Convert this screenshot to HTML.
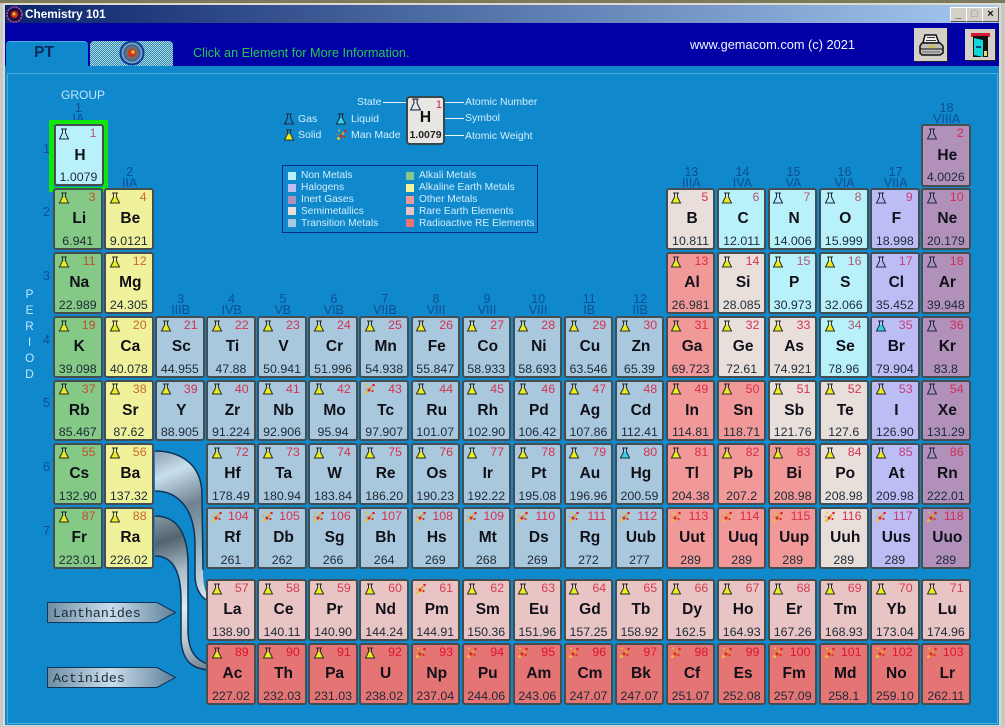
<!DOCTYPE html>
<html><head><meta charset="utf-8"><title>Chemistry 101</title>
<style>
html,body{margin:0;padding:0;width:1005px;height:727px;overflow:hidden;background:#c9c9c2;font-family:"Liberation Sans",sans-serif}
.a,.e,.g{position:absolute}
.e{width:45.5px;height:57.5px;margin:-2px 0 0 -1.5px;border:2.75px solid #464d51;border-radius:3px;z-index:3;color:#111}
.e svg{position:absolute;left:2.5px;top:1.5px;width:12px;height:12px}
.e b{position:absolute;right:5px;top:1px;font:12.4px/13px "Liberation Sans",sans-serif;color:#d83050}
.e u{position:absolute;left:3px;right:0;top:20px;text-align:center;text-decoration:none;font:bold 15.5px/18px "Liberation Sans",sans-serif;color:#101018}
.e i{position:absolute;left:0;right:0;top:44.5px;text-align:center;font:12.4px/13px "Liberation Sans",sans-serif;color:#1c2a36}
.nm{background:#b9f1fb}.nm b{color:#b05a70}
.ha{background:#bdbdf6}.ha b{color:#c83c78}
.in{background:#b191ba}.in b{color:#d42c58}
.se{background:#e8dfdb}
.tr{background:#a9c8dd}
.ak{background:#85c986}.ak b{color:#c0502c}
.ae{background:#f0f19b}.ae b{color:#c8682a}
.om{background:#f19999}.om b{color:#dc2c48}
.re{background:#e8c4c5}.re b{color:#d83a50}
.ra{background:#e57475}.ra b{color:#e0142c}
.c1{left:54.5px}.c2{left:105.6px}.c3{left:156.6px}.c4{left:207.7px}.c5{left:258.8px}.c6{left:309.8px}.c7{left:360.9px}.c8{left:412px}.c9{left:463px}.c10{left:514.1px}.c11{left:565.2px}.c12{left:616.2px}.c13{left:667.3px}.c14{left:718.4px}.c15{left:769.4px}.c16{left:820.5px}.c17{left:871.6px}.c18{left:922.6px}
.r1{top:126px;height:58.5px}.r2{top:190px}.r3{top:254px}.r4{top:318px}.r5{top:381.5px}.r6{top:445px}.r7{top:509px}.r8{top:581px}.r9{top:645px}
.r1 i{top:44.5px}.r1 u{top:21px}
.g{width:48px;text-align:center;font:12.5px/11px "Liberation Sans",sans-serif;color:#0c4f92;z-index:1}
.p{position:absolute;font:12.5px/14px "Liberation Sans",sans-serif;color:#0c4f92;z-index:1}
.w{position:absolute;font:10.5px/12px "Liberation Sans",sans-serif;color:#d3eefb;white-space:nowrap;z-index:2}
.t{font-size:10.2px}
.k{position:absolute;width:8px;height:8px}
.l{position:absolute;background:#eaf6fb;height:1px}
.b{position:absolute;width:15px;height:13px;background:#d4d0c8;border:1px solid;border-color:#fff #555 #555 #fff;font:bold 11px/13px "Liberation Sans",sans-serif;text-align:center;color:#111}
</style></head>
<body>
<svg width="0" height="0" style="position:absolute"><defs>
<symbol id="g" viewBox="0 0 12 12"><path d="M3 1H9M4.500 1V5L1.500 11H10.500L7.500 5V1" fill="none" stroke="#1c2a40" stroke-width="1"/></symbol>
<symbol id="s" viewBox="0 0 12 12"><path d="M4.500 5H7.500L10.500 11H1.500Z" fill="#ecec24"/><path d="M3 1H9M4.500 1V5L1.500 11H10.500L7.500 5V1" fill="none" stroke="#2a3020" stroke-width="1"/></symbol>
<symbol id="l" viewBox="0 0 12 12"><path d="M4.500 5H7.500L10.500 11H1.500Z" fill="#35d3e6"/><path d="M3 1H9M4.500 1V5L1.500 11H10.500L7.500 5V1" fill="none" stroke="#1c2a40" stroke-width="1"/></symbol>
<symbol id="m" viewBox="0 0 12 12"><circle cx="9.500" cy="2" r="1.300" fill="#e02020"/><circle cx="3" cy="1.500" r="1" fill="#e8c030"/><circle cx="7" cy="4.500" r="1.400" fill="#e8a020"/><circle cx="5" cy="7" r="1.600" fill="#d83018"/><circle cx="2.500" cy="9.500" r="1.500" fill="#e8c030"/><circle cx="8.500" cy="8" r="1.100" fill="#d83018"/><circle cx="1.500" cy="5.500" r=".8" fill="#e09020"/></symbol>
<linearGradient id="r1" gradientUnits="userSpaceOnUse" x1="150" y1="445" x2="215" y2="600"><stop offset="0" stop-color="#7d8f9e"/><stop offset=".2" stop-color="#c8dfee"/><stop offset=".42" stop-color="#6f8291"/><stop offset=".75" stop-color="#a8bcc9"/><stop offset="1" stop-color="#dce8ef"/></linearGradient>
<linearGradient id="r2" gradientUnits="userSpaceOnUse" x1="150" y1="515" x2="205" y2="670"><stop offset="0" stop-color="#8b9daa"/><stop offset=".18" stop-color="#54646f"/><stop offset=".38" stop-color="#a8bcc8"/><stop offset=".6" stop-color="#dfeaf1"/><stop offset=".8" stop-color="#b5c6d2"/><stop offset="1" stop-color="#6f8291"/></linearGradient>
<linearGradient id="ar" x1="0" y1="0" x2="1" y2="0"><stop offset="0" stop-color="#6f8ea4"/><stop offset=".5" stop-color="#c8deec"/><stop offset="1" stop-color="#5f8098"/></linearGradient>
</defs></svg>

<div class="a" style="left:0;top:0;width:1005px;height:3px;background:#7d7a5c"></div>
<div class="a" style="left:3px;top:3px;width:998px;height:723px;background:#dcd9d0"></div>
<div class="a" style="left:5px;top:5px;width:994px;height:18px;background:linear-gradient(90deg,#0a246a,#a6caf0)"></div>
<div class="a" style="left:5px;top:23px;width:994px;height:43px;background:#0000a6"></div>
<div class="a" style="left:5px;top:66px;width:994px;height:659px;background:#1088cc"></div>
<div class="a" style="left:7px;top:73px;width:989px;height:649px;border:1px solid #4aaedd"></div>

<svg class="a" style="left:6px;top:6px" width="17" height="17" viewBox="0 0 17 17"><circle cx="8.500" cy="8.500" r="7.500" fill="#201040" stroke="#c050b0" stroke-dasharray="2 1" stroke-width="1.500"/><circle cx="8.500" cy="8.500" r="3.500" fill="#d83018"/><circle cx="8" cy="8" r="1.500" fill="#f0c020"/></svg>
<div class="a" style="left:25px;top:7px;font:bold 11.800px/14px 'Liberation Sans',sans-serif;color:#fff">Chemistry 101</div>
<div class="b" style="left:950px;top:7px">_</div><div class="b" style="left:966px;top:7px;color:#888">□</div><div class="b" style="left:982px;top:7px">×</div>

<div class="a" style="left:6px;top:41px;width:82px;height:26px;padding-right:6px;background:#1088cc;border-radius:4px 4px 0 0;border-top:1px solid #4aaedd;box-sizing:border-box;text-align:center;font:bold 15.500px/21px 'Liberation Sans',sans-serif;color:#0a2a5a">PT</div>
<div class="a" style="left:90px;top:41px;width:83px;height:25px;border-radius:4px 4px 0 0;background:repeating-conic-gradient(#b5d5cf 0 25%,#2a8cc4 0 50%) 0 0/2px 2px"></div>
<svg class="a" style="left:119px;top:40px" width="26" height="26" viewBox="0 0 26 26"><circle cx="13" cy="13" r="11.500" fill="#7fa0b0" stroke="#0a3aa0" stroke-width="2"/><circle cx="13" cy="13" r="8" fill="#6b6b70" stroke="#1060c0" stroke-width="1"/><circle cx="13" cy="13" r="4" fill="#d83018"/><circle cx="14" cy="12" r="1.800" fill="#f0c020"/></svg>
<div class="a" style="left:193px;top:46px;font:12.700px/14px 'Liberation Sans',sans-serif;color:#28c850">Click an Element for More Information.</div>
<div class="a" style="left:690px;top:38px;font:12.800px/14px 'Liberation Sans',sans-serif;color:#f2f6ff">www.gemacom.com (c) 2021</div>

<div class="a" style="left:914px;top:28px;width:33px;height:33px;background:#d4d0c8;box-shadow:1px 1px 0 #222"></div>
<svg class="a" style="left:919px;top:34px" width="25" height="23" viewBox="0 0 25 23"><path d="M6 1H17L20 9H4Z" fill="#f2f2f2" stroke="#111" stroke-width="1.500"/><path d="M8 3.500H16M7 6.500H17" stroke="#333"/><path d="M3 9H21L24 12V19L21 21H3L1 19V12Z" fill="#bdbdbd" stroke="#111" stroke-width="1.500"/><path d="M1.500 15H23.500" stroke="#111"/><path d="M10 12.500H16" stroke="#d8c020" stroke-width="2"/><path d="M3 18H21" stroke="#666"/></svg>
<div class="a" style="left:965px;top:29px;width:30px;height:31px;background:#d4d0c8;box-shadow:1px 1px 0 #222"></div>
<svg class="a" style="left:970px;top:32px" width="21" height="26" viewBox="0 0 21 26"><rect x="1" y="1" width="19" height="4" fill="#d81830"/><rect x="3" y="4" width="15" height="21" fill="#111"/><path d="M4 6L13 8V25L4 23Z" fill="#10d8d8"/><rect x="14" y="19" width="3" height="5" fill="#e8d870"/><path d="M6 15H11" stroke="#115" stroke-width="1.500"/></svg>

<div class="w" style="left:61px;top:88px;font-size:12px;line-height:14px;color:#bfe8fb">GROUP</div>
<div class="g c1" style="top:103px">1<br>IA</div><div class="g c2" style="top:167px">2<br>IIA</div>
<div class="g c3" style="top:294px">3<br>IIIB</div><div class="g c4" style="top:294px">4<br>IVB</div><div class="g c5" style="top:294px">5<br>VB</div><div class="g c6" style="top:294px">6<br>VIB</div><div class="g c7" style="top:294px">7<br>VIIB</div><div class="g c8" style="top:294px">8<br>VIII</div><div class="g c9" style="top:294px">9<br>VIII</div><div class="g c10" style="top:294px">10<br>VIII</div><div class="g c11" style="top:294px">11<br>IB</div><div class="g c12" style="top:294px">12<br>IIB</div>
<div class="g c13" style="top:167px">13<br>IIIA</div><div class="g c14" style="top:167px">14<br>IVA</div><div class="g c15" style="top:167px">15<br>VA</div><div class="g c16" style="top:167px">16<br>VIA</div><div class="g c17" style="top:167px">17<br>VIIA</div><div class="g c18" style="top:103px">18<br>VIIIA</div>
<div class="p" style="left:43px;top:142px">1</div><div class="p" style="left:43px;top:205px">2</div><div class="p" style="left:43px;top:269px">3</div><div class="p" style="left:43px;top:333px">4</div><div class="p" style="left:43px;top:396px">5</div><div class="p" style="left:43px;top:460px">6</div><div class="p" style="left:43px;top:524px">7</div>
<div class="w" style="left:25px;top:286px;font-size:12px;line-height:16px;color:#bfe8fb;text-align:center;width:9px">P<br>E<br>R<br>I<br>O<br>D</div>

<svg class="a" style="left:283px;top:113px" width="12" height="12"><use href="#g"/></svg><div class="w" style="left:298px;top:113px">Gas</div>
<svg class="a" style="left:283px;top:129px" width="12" height="12"><use href="#s"/></svg><div class="w" style="left:298px;top:129px">Solid</div>
<svg class="a" style="left:335px;top:113px" width="12" height="12"><use href="#l"/></svg><div class="w" style="left:351px;top:113px">Liquid</div>
<svg class="a" style="left:336px;top:129px" width="12" height="12"><use href="#m"/></svg><div class="w" style="left:351px;top:129px">Man Made</div>
<div class="w" style="left:357px;top:96px">State</div><div class="l" style="left:383px;top:102px;width:24px"></div>
<div class="w" style="left:465px;top:96px">Atomic Number</div><div class="w" style="left:465px;top:112px">Symbol</div><div class="w" style="left:465px;top:130px">Atomic Weight</div>
<div class="l" style="left:442px;top:102px;width:22px"></div><div class="l" style="left:434px;top:118px;width:30px"></div><div class="l" style="left:442px;top:135px;width:22px"></div>
<div class="a" style="left:406px;top:96px;width:35px;height:45px;border:2px solid #39464d;border-radius:4px;background:#e8e6e2;z-index:3">
<svg class="a" style="left:1px;top:0" width="13" height="13"><use href="#g"/></svg>
<span class="a" style="right:1px;top:1px;font:11px/13px 'Liberation Sans',sans-serif;color:#d02030">1</span>
<span class="a" style="left:0;right:0;top:11px;text-align:center;font:bold 15.500px/18px 'Liberation Sans',sans-serif;color:#111">H</span>
<span class="a" style="left:0;right:0;top:31px;text-align:center;font:bold 10.500px/13px 'Liberation Sans',sans-serif;color:#222">1.0079</span></div>

<div class="a" style="left:282px;top:165px;width:254px;height:66px;border:1px solid #0a2a80"></div>
<div class="k" style="left:288px;top:172px;background:#b9f1fb"></div><div class="w t" style="left:301px;top:170px">Non Metals</div>
<div class="k" style="left:288px;top:184px;background:#bdbdf0"></div><div class="w t" style="left:301px;top:182px">Halogens</div>
<div class="k" style="left:288px;top:196px;background:#b191ba"></div><div class="w t" style="left:301px;top:194px">Inert Gases</div>
<div class="k" style="left:288px;top:207px;background:#e8dfdb"></div><div class="w t" style="left:301px;top:206px">Semimetallics</div>
<div class="k" style="left:288px;top:219px;background:#a9c8dd"></div><div class="w t" style="left:301px;top:218px">Transition Metals</div>
<div class="k" style="left:406px;top:172px;background:#85c986"></div><div class="w t" style="left:419px;top:170px">Alkali Metals</div>
<div class="k" style="left:406px;top:184px;background:#f0f19b"></div><div class="w t" style="left:419px;top:182px">Alkaline Earth Metals</div>
<div class="k" style="left:406px;top:196px;background:#f19999"></div><div class="w t" style="left:419px;top:194px">Other Metals</div>
<div class="k" style="left:406px;top:207px;background:#e8c4c5"></div><div class="w t" style="left:419px;top:206px">Rare Earth Elements</div>
<div class="k" style="left:406px;top:219px;background:#e57475"></div><div class="w t" style="left:419px;top:218px">Radioactive RE Elements</div>

<svg class="a" style="left:0;top:0;z-index:2" width="1005" height="727">
<path d="M155 451C175 451 202 460 202 495L203 570C203 590 207 593 208 597V601C202 598 195 590 195 575V545C195 505 175 491 155 491Z" fill="url(#r1)"/>
<path d="M155 451C175 451 202 460 202 495L203 570M155 491C175 491 195 505 195 545V575C195 590 202 598 208 601" fill="none" stroke="#0c3458" stroke-width="1.500"/>
<path d="M155 516C175 516 188 530 188 565V630C188 650 195 660 208 664V670C195 668 183 665 181 640V600C181 570 172 556 155 556Z" fill="url(#r2)"/>
<path d="M155 516C175 516 188 530 188 565V630C188 650 195 660 208 664M155 556C172 556 181 570 181 600V640C183 665 195 668 208 670" fill="none" stroke="#0c3458" stroke-width="1.500"/>
<path d="M47.500 602.500H157L175.500 612.500L157 622.500H47.500Z" fill="url(#ar)" stroke="#0c3458"/>
<path d="M47.500 667.500H157L175.500 677.500L157 687.500H47.500Z" fill="url(#ar)" stroke="#0c3458"/>
<text x="53" y="617" font-family="Liberation Mono, monospace" font-size="13.300" fill="#1c2a38">Lanthanides</text>
<text x="53" y="682" font-family="Liberation Mono, monospace" font-size="13.300" fill="#1c2a38">Actinides</text>
</svg>

<div class="a" style="left:49px;top:120px;width:49px;height:62px;border:5px solid #0ee60e;z-index:2"></div>

<div class="e nm c1 r1" style="left:55px;top:126px;border-width:2px;width:46px;height:58px;z-index:4"><svg><use href="#g"/></svg><b>1</b><u>H</u><i>1.0079</i></div>
<div class="e in c18 r1"><svg><use href="#g"/></svg><b>2</b><u>He</u><i>4.0026</i></div>
<div class="e ak c1 r2"><svg><use href="#s"/></svg><b>3</b><u>Li</u><i>6.941</i></div>
<div class="e ae c2 r2"><svg><use href="#s"/></svg><b>4</b><u>Be</u><i>9.0121</i></div>
<div class="e se c13 r2"><svg><use href="#s"/></svg><b>5</b><u>B</u><i>10.811</i></div>
<div class="e nm c14 r2"><svg><use href="#s"/></svg><b>6</b><u>C</u><i>12.011</i></div>
<div class="e nm c15 r2"><svg><use href="#g"/></svg><b>7</b><u>N</u><i>14.006</i></div>
<div class="e nm c16 r2"><svg><use href="#g"/></svg><b>8</b><u>O</u><i>15.999</i></div>
<div class="e ha c17 r2"><svg><use href="#g"/></svg><b>9</b><u>F</u><i>18.998</i></div>
<div class="e in c18 r2"><svg><use href="#g"/></svg><b>10</b><u>Ne</u><i>20.179</i></div>
<div class="e ak c1 r3"><svg><use href="#s"/></svg><b>11</b><u>Na</u><i>22.989</i></div>
<div class="e ae c2 r3"><svg><use href="#s"/></svg><b>12</b><u>Mg</u><i>24.305</i></div>
<div class="e om c13 r3"><svg><use href="#s"/></svg><b>13</b><u>Al</u><i>26.981</i></div>
<div class="e se c14 r3"><svg><use href="#s"/></svg><b>14</b><u>Si</u><i>28.085</i></div>
<div class="e nm c15 r3"><svg><use href="#s"/></svg><b>15</b><u>P</u><i>30.973</i></div>
<div class="e nm c16 r3"><svg><use href="#s"/></svg><b>16</b><u>S</u><i>32.066</i></div>
<div class="e ha c17 r3"><svg><use href="#g"/></svg><b>17</b><u>Cl</u><i>35.452</i></div>
<div class="e in c18 r3"><svg><use href="#g"/></svg><b>18</b><u>Ar</u><i>39.948</i></div>
<div class="e ak c1 r4"><svg><use href="#s"/></svg><b>19</b><u>K</u><i>39.098</i></div>
<div class="e ae c2 r4"><svg><use href="#s"/></svg><b>20</b><u>Ca</u><i>40.078</i></div>
<div class="e tr c3 r4"><svg><use href="#s"/></svg><b>21</b><u>Sc</u><i>44.955</i></div>
<div class="e tr c4 r4"><svg><use href="#s"/></svg><b>22</b><u>Ti</u><i>47.88</i></div>
<div class="e tr c5 r4"><svg><use href="#s"/></svg><b>23</b><u>V</u><i>50.941</i></div>
<div class="e tr c6 r4"><svg><use href="#s"/></svg><b>24</b><u>Cr</u><i>51.996</i></div>
<div class="e tr c7 r4"><svg><use href="#s"/></svg><b>25</b><u>Mn</u><i>54.938</i></div>
<div class="e tr c8 r4"><svg><use href="#s"/></svg><b>26</b><u>Fe</u><i>55.847</i></div>
<div class="e tr c9 r4"><svg><use href="#s"/></svg><b>27</b><u>Co</u><i>58.933</i></div>
<div class="e tr c10 r4"><svg><use href="#s"/></svg><b>28</b><u>Ni</u><i>58.693</i></div>
<div class="e tr c11 r4"><svg><use href="#s"/></svg><b>29</b><u>Cu</u><i>63.546</i></div>
<div class="e tr c12 r4"><svg><use href="#s"/></svg><b>30</b><u>Zn</u><i>65.39</i></div>
<div class="e om c13 r4"><svg><use href="#s"/></svg><b>31</b><u>Ga</u><i>69.723</i></div>
<div class="e se c14 r4"><svg><use href="#s"/></svg><b>32</b><u>Ge</u><i>72.61</i></div>
<div class="e se c15 r4"><svg><use href="#s"/></svg><b>33</b><u>As</u><i>74.921</i></div>
<div class="e nm c16 r4"><svg><use href="#s"/></svg><b>34</b><u>Se</u><i>78.96</i></div>
<div class="e ha c17 r4"><svg><use href="#l"/></svg><b>35</b><u>Br</u><i>79.904</i></div>
<div class="e in c18 r4"><svg><use href="#g"/></svg><b>36</b><u>Kr</u><i>83.8</i></div>
<div class="e ak c1 r5"><svg><use href="#s"/></svg><b>37</b><u>Rb</u><i>85.467</i></div>
<div class="e ae c2 r5"><svg><use href="#s"/></svg><b>38</b><u>Sr</u><i>87.62</i></div>
<div class="e tr c3 r5"><svg><use href="#s"/></svg><b>39</b><u>Y</u><i>88.905</i></div>
<div class="e tr c4 r5"><svg><use href="#s"/></svg><b>40</b><u>Zr</u><i>91.224</i></div>
<div class="e tr c5 r5"><svg><use href="#s"/></svg><b>41</b><u>Nb</u><i>92.906</i></div>
<div class="e tr c6 r5"><svg><use href="#s"/></svg><b>42</b><u>Mo</u><i>95.94</i></div>
<div class="e tr c7 r5"><svg><use href="#m"/></svg><b>43</b><u>Tc</u><i>97.907</i></div>
<div class="e tr c8 r5"><svg><use href="#s"/></svg><b>44</b><u>Ru</u><i>101.07</i></div>
<div class="e tr c9 r5"><svg><use href="#s"/></svg><b>45</b><u>Rh</u><i>102.90</i></div>
<div class="e tr c10 r5"><svg><use href="#s"/></svg><b>46</b><u>Pd</u><i>106.42</i></div>
<div class="e tr c11 r5"><svg><use href="#s"/></svg><b>47</b><u>Ag</u><i>107.86</i></div>
<div class="e tr c12 r5"><svg><use href="#s"/></svg><b>48</b><u>Cd</u><i>112.41</i></div>
<div class="e om c13 r5"><svg><use href="#s"/></svg><b>49</b><u>In</u><i>114.81</i></div>
<div class="e om c14 r5"><svg><use href="#s"/></svg><b>50</b><u>Sn</u><i>118.71</i></div>
<div class="e se c15 r5"><svg><use href="#s"/></svg><b>51</b><u>Sb</u><i>121.76</i></div>
<div class="e se c16 r5"><svg><use href="#s"/></svg><b>52</b><u>Te</u><i>127.6</i></div>
<div class="e ha c17 r5"><svg><use href="#s"/></svg><b>53</b><u>I</u><i>126.90</i></div>
<div class="e in c18 r5"><svg><use href="#g"/></svg><b>54</b><u>Xe</u><i>131.29</i></div>
<div class="e ak c1 r6"><svg><use href="#s"/></svg><b>55</b><u>Cs</u><i>132.90</i></div>
<div class="e ae c2 r6"><svg><use href="#s"/></svg><b>56</b><u>Ba</u><i>137.32</i></div>
<div class="e tr c4 r6"><svg><use href="#s"/></svg><b>72</b><u>Hf</u><i>178.49</i></div>
<div class="e tr c5 r6"><svg><use href="#s"/></svg><b>73</b><u>Ta</u><i>180.94</i></div>
<div class="e tr c6 r6"><svg><use href="#s"/></svg><b>74</b><u>W</u><i>183.84</i></div>
<div class="e tr c7 r6"><svg><use href="#s"/></svg><b>75</b><u>Re</u><i>186.20</i></div>
<div class="e tr c8 r6"><svg><use href="#s"/></svg><b>76</b><u>Os</u><i>190.23</i></div>
<div class="e tr c9 r6"><svg><use href="#s"/></svg><b>77</b><u>Ir</u><i>192.22</i></div>
<div class="e tr c10 r6"><svg><use href="#s"/></svg><b>78</b><u>Pt</u><i>195.08</i></div>
<div class="e tr c11 r6"><svg><use href="#s"/></svg><b>79</b><u>Au</u><i>196.96</i></div>
<div class="e tr c12 r6"><svg><use href="#l"/></svg><b>80</b><u>Hg</u><i>200.59</i></div>
<div class="e om c13 r6"><svg><use href="#s"/></svg><b>81</b><u>Tl</u><i>204.38</i></div>
<div class="e om c14 r6"><svg><use href="#s"/></svg><b>82</b><u>Pb</u><i>207.2</i></div>
<div class="e om c15 r6"><svg><use href="#s"/></svg><b>83</b><u>Bi</u><i>208.98</i></div>
<div class="e se c16 r6"><svg><use href="#s"/></svg><b>84</b><u>Po</u><i>208.98</i></div>
<div class="e ha c17 r6"><svg><use href="#s"/></svg><b>85</b><u>At</u><i>209.98</i></div>
<div class="e in c18 r6"><svg><use href="#g"/></svg><b>86</b><u>Rn</u><i>222.01</i></div>
<div class="e ak c1 r7"><svg><use href="#s"/></svg><b>87</b><u>Fr</u><i>223.01</i></div>
<div class="e ae c2 r7"><svg><use href="#s"/></svg><b>88</b><u>Ra</u><i>226.02</i></div>
<div class="e tr c4 r7"><svg><use href="#m"/></svg><b>104</b><u>Rf</u><i>261</i></div>
<div class="e tr c5 r7"><svg><use href="#m"/></svg><b>105</b><u>Db</u><i>262</i></div>
<div class="e tr c6 r7"><svg><use href="#m"/></svg><b>106</b><u>Sg</u><i>266</i></div>
<div class="e tr c7 r7"><svg><use href="#m"/></svg><b>107</b><u>Bh</u><i>264</i></div>
<div class="e tr c8 r7"><svg><use href="#m"/></svg><b>108</b><u>Hs</u><i>269</i></div>
<div class="e tr c9 r7"><svg><use href="#m"/></svg><b>109</b><u>Mt</u><i>268</i></div>
<div class="e tr c10 r7"><svg><use href="#m"/></svg><b>110</b><u>Ds</u><i>269</i></div>
<div class="e tr c11 r7"><svg><use href="#m"/></svg><b>111</b><u>Rg</u><i>272</i></div>
<div class="e tr c12 r7"><svg><use href="#m"/></svg><b>112</b><u>Uub</u><i>277</i></div>
<div class="e om c13 r7"><svg><use href="#m"/></svg><b>113</b><u>Uut</u><i>289</i></div>
<div class="e om c14 r7"><svg><use href="#m"/></svg><b>114</b><u>Uuq</u><i>289</i></div>
<div class="e om c15 r7"><svg><use href="#m"/></svg><b>115</b><u>Uup</u><i>289</i></div>
<div class="e se c16 r7"><svg><use href="#m"/></svg><b>116</b><u>Uuh</u><i>289</i></div>
<div class="e ha c17 r7"><svg><use href="#m"/></svg><b>117</b><u>Uus</u><i>289</i></div>
<div class="e in c18 r7"><svg><use href="#m"/></svg><b>118</b><u>Uuo</u><i>289</i></div>
<div class="e re c4 r8"><svg><use href="#s"/></svg><b>57</b><u>La</u><i>138.90</i></div>
<div class="e re c5 r8"><svg><use href="#s"/></svg><b>58</b><u>Ce</u><i>140.11</i></div>
<div class="e re c6 r8"><svg><use href="#s"/></svg><b>59</b><u>Pr</u><i>140.90</i></div>
<div class="e re c7 r8"><svg><use href="#s"/></svg><b>60</b><u>Nd</u><i>144.24</i></div>
<div class="e re c8 r8"><svg><use href="#m"/></svg><b>61</b><u>Pm</u><i>144.91</i></div>
<div class="e re c9 r8"><svg><use href="#s"/></svg><b>62</b><u>Sm</u><i>150.36</i></div>
<div class="e re c10 r8"><svg><use href="#s"/></svg><b>63</b><u>Eu</u><i>151.96</i></div>
<div class="e re c11 r8"><svg><use href="#s"/></svg><b>64</b><u>Gd</u><i>157.25</i></div>
<div class="e re c12 r8"><svg><use href="#s"/></svg><b>65</b><u>Tb</u><i>158.92</i></div>
<div class="e re c13 r8"><svg><use href="#s"/></svg><b>66</b><u>Dy</u><i>162.5</i></div>
<div class="e re c14 r8"><svg><use href="#s"/></svg><b>67</b><u>Ho</u><i>164.93</i></div>
<div class="e re c15 r8"><svg><use href="#s"/></svg><b>68</b><u>Er</u><i>167.26</i></div>
<div class="e re c16 r8"><svg><use href="#s"/></svg><b>69</b><u>Tm</u><i>168.93</i></div>
<div class="e re c17 r8"><svg><use href="#s"/></svg><b>70</b><u>Yb</u><i>173.04</i></div>
<div class="e re c18 r8"><svg><use href="#s"/></svg><b>71</b><u>Lu</u><i>174.96</i></div>
<div class="e ra c4 r9"><svg><use href="#s"/></svg><b>89</b><u>Ac</u><i>227.02</i></div>
<div class="e ra c5 r9"><svg><use href="#s"/></svg><b>90</b><u>Th</u><i>232.03</i></div>
<div class="e ra c6 r9"><svg><use href="#s"/></svg><b>91</b><u>Pa</u><i>231.03</i></div>
<div class="e ra c7 r9"><svg><use href="#s"/></svg><b>92</b><u>U</u><i>238.02</i></div>
<div class="e ra c8 r9"><svg><use href="#m"/></svg><b>93</b><u>Np</u><i>237.04</i></div>
<div class="e ra c9 r9"><svg><use href="#m"/></svg><b>94</b><u>Pu</u><i>244.06</i></div>
<div class="e ra c10 r9"><svg><use href="#m"/></svg><b>95</b><u>Am</u><i>243.06</i></div>
<div class="e ra c11 r9"><svg><use href="#m"/></svg><b>96</b><u>Cm</u><i>247.07</i></div>
<div class="e ra c12 r9"><svg><use href="#m"/></svg><b>97</b><u>Bk</u><i>247.07</i></div>
<div class="e ra c13 r9"><svg><use href="#m"/></svg><b>98</b><u>Cf</u><i>251.07</i></div>
<div class="e ra c14 r9"><svg><use href="#m"/></svg><b>99</b><u>Es</u><i>252.08</i></div>
<div class="e ra c15 r9"><svg><use href="#m"/></svg><b>100</b><u>Fm</u><i>257.09</i></div>
<div class="e ra c16 r9"><svg><use href="#m"/></svg><b>101</b><u>Md</u><i>258.1</i></div>
<div class="e ra c17 r9"><svg><use href="#m"/></svg><b>102</b><u>No</u><i>259.10</i></div>
<div class="e ra c18 r9"><svg><use href="#m"/></svg><b>103</b><u>Lr</u><i>262.11</i></div>
</body></html>
